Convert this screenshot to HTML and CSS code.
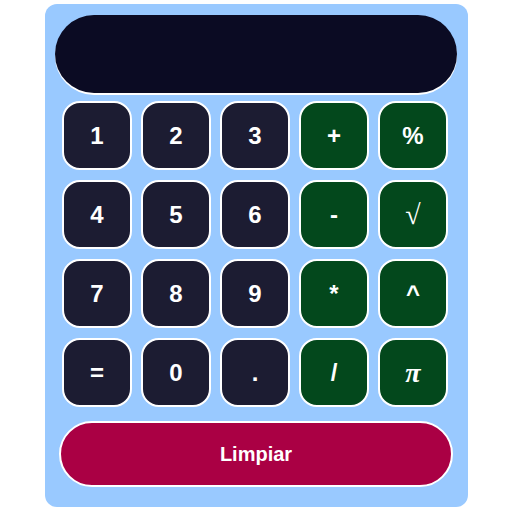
FILE: index.html
```html
<!DOCTYPE html>
<html lang="es">
<head>
<meta charset="utf-8">
<title>Calculadora</title>
<link rel="stylesheet" href="styles.css">
</head>
<body>
<div class="calc">
  <div class="display"></div>
  <div class="keys">
    <button class="key num">1</button>
    <button class="key num">2</button>
    <button class="key num">3</button>
    <button class="key op">+</button>
    <button class="key op">%</button>
    <button class="key num">4</button>
    <button class="key num">5</button>
    <button class="key num">6</button>
    <button class="key op">-</button>
    <button class="key op serif">√</button>
    <button class="key num">7</button>
    <button class="key num">8</button>
    <button class="key num">9</button>
    <button class="key op">*</button>
    <button class="key op">^</button>
    <button class="key num">=</button>
    <button class="key num">0</button>
    <button class="key num">.</button>
    <button class="key op">/</button>
    <button class="key op serif pi">π</button>
  </div>
  <button class="clear">Limpiar</button>
</div>
</body>
</html>
```

FILE: styles.css
```css
html, body {
  margin: 0;
  padding: 0;
  background: #ffffff;
}

body {
  font-family: "Liberation Sans", Arial, sans-serif;
  padding-top: 4px;
}

.calc {
  box-sizing: border-box;
  width: 423px;
  height: 503px;
  margin: 0 auto;
  background: #99c9ff;
  border-radius: 12px;
  padding: 11px 0 0 0;
  display: flex;
  flex-direction: column;
  align-items: center;
}

.display {
  width: 402px;
  height: 78px;
  border-radius: 39px;
  background: #0b0b23;
  box-shadow: 0 2px 0 #ffffff;
}

.keys {
  margin-top: 8px;
  display: grid;
  grid-template-columns: repeat(5, 70px);
  grid-auto-rows: 69px;
  column-gap: 9px;
  row-gap: 10px;
  margin-right: 2px;
}

.key {
  box-sizing: border-box;
  border: 2px solid #ffffff;
  border-radius: 18px;
  color: #ffffff;
  font-family: "Liberation Sans", Arial, sans-serif;
  font-weight: bold;
  font-size: 24px;
  padding: 0;
  display: flex;
  align-items: center;
  justify-content: center;
}

.num {
  background: #1c1c32;
}

.op {
  background: #03481c;
}

.serif {
  font-family: "Liberation Serif", "Times New Roman", serif;
  font-weight: normal;
  font-size: 28px;
}

.pi {
  font-style: italic;
  font-weight: bold;
  font-size: 28px;
}

.clear {
  box-sizing: border-box;
  margin-top: 14px;
  width: 394px;
  height: 66px;
  border: 2px solid #ffffff;
  border-radius: 33px;
  background: #aa0044;
  color: #ffffff;
  font-family: "Liberation Sans", Arial, sans-serif;
  font-weight: bold;
  font-size: 20px;
  padding: 0;
}
```
